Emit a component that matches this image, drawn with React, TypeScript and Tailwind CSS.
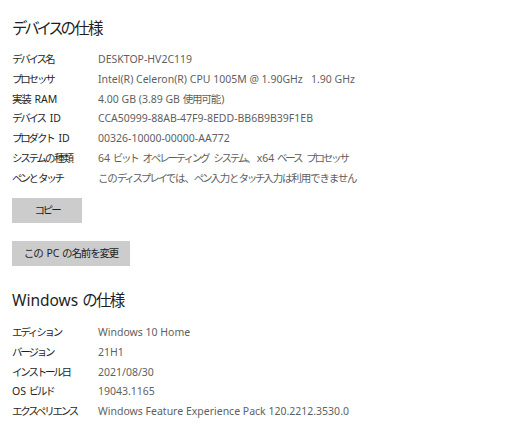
import React from 'react';

const deviceSpecs: [string, string][] = [
  ['デバイス名', 'DESKTOP-HV2C119'],
  ['プロセッサ', 'Intel(R) Celeron(R) CPU 1005M @ 1.90GHz   1.90 GHz'],
  ['実装 RAM', '4.00 GB (3.89 GB 使用可能)'],
  ['デバイス ID', 'CCA50999-88AB-47F9-8EDD-BB6B9B39F1EB'],
  ['プロダクト ID', '00326-10000-00000-AA772'],
  ['システムの種類', '64 ビット オペレーティング システム、x64 ベース プロセッサ'],
  ['ペンとタッチ', 'このディスプレイでは、ペン入力とタッチ入力は利用できません'],
];

const windowsSpecs: [string, string][] = [
  ['エディション', 'Windows 10 Home'],
  ['バージョン', '21H1'],
  ['インストール日', '2021/08/30'],
  ['OS ビルド', '19043.1165'],
  ['エクスペリエンス', 'Windows Feature Experience Pack 120.2212.3530.0'],
];

const font = 'font-["Noto_Sans","Noto_Sans_CJK_JP",sans-serif]';

const KANA = /[\u30a0-\u30ff]/;
const CJK = /[\u3000-\u30ff\u4e00-\u9fff\uff00-\uffef]/;

// Noto CJK is wider than the Windows UI font: katakana get squeezed more than kanji/hiragana.
function Jp({ text }: { text: string }) {
  const parts = text.split(/([\u30a0-\u30ff]+|[\u3000-\u309f\u4e00-\u9fff\uff00-\uffef]+)/).filter(Boolean);
  return (
    <>
      {parts.map((p, i) => {
        if (!CJK.test(p)) return <span key={i}>{p}</span>;
        const next = parts[i + 1];
        const keepGap = next !== undefined && !CJK.test(next[0]);
        if (KANA.test(p)) {
          return (
            <span key={i} className={`tracking-[-0.21em] ${keepGap ? 'pr-[0.21em]' : ''}`}>
              {p}
            </span>
          );
        }
        return (
          <span key={i} className={`tracking-[-0.11em] ${keepGap ? 'pr-[0.11em]' : ''}`}>
            {p}
          </span>
        );
      })}
    </>
  );
}

function SpecRows({ rows }: { rows: [string, string][] }) {
  return (
    <div className="flex flex-col">
      {rows.map(([label, value]) => (
        <div key={label} className="flex h-[19.8px] items-center text-[10.5px] whitespace-pre">
          <span className="w-[86px] shrink-0 text-[#1f1f1f]">
            <Jp text={label} />
          </span>
          <span className="text-[#5f5f5f]">
            <Jp text={value} />
          </span>
        </div>
      ))}
    </div>
  );
}

export default function App() {
  return (
    <div className={`w-[512px] h-[432px] overflow-hidden bg-white pl-3 pt-[17px] ${font}`}>
      <h2 className="text-[15.5px] leading-[22px] text-[#1f1f1f]">
        <Jp text="デバイスの仕様" />
      </h2>
      <div className="mt-[11px]">
        <SpecRows rows={deviceSpecs} />
      </div>
      <button className="mt-[9.5px] flex h-[25px] w-[70px] items-center justify-center bg-[#cccccc] text-[10.5px] text-[#1f1f1f] whitespace-pre">
        <Jp text="コピー" />
      </button>
      <button className="mt-[18px] flex h-[25px] w-[118px] items-center justify-center bg-[#cccccc] text-[10.5px] text-[#1f1f1f] whitespace-pre">
        <Jp text="この PC の名前を変更" />
      </button>
      <h2 className="mt-[23px] text-[15.5px] leading-[22px] text-[#1f1f1f] whitespace-pre">
        <Jp text="Windows の仕様" />
      </h2>
      <div className="mt-[12px]">
        <SpecRows rows={windowsSpecs} />
      </div>
    </div>
  );
}
